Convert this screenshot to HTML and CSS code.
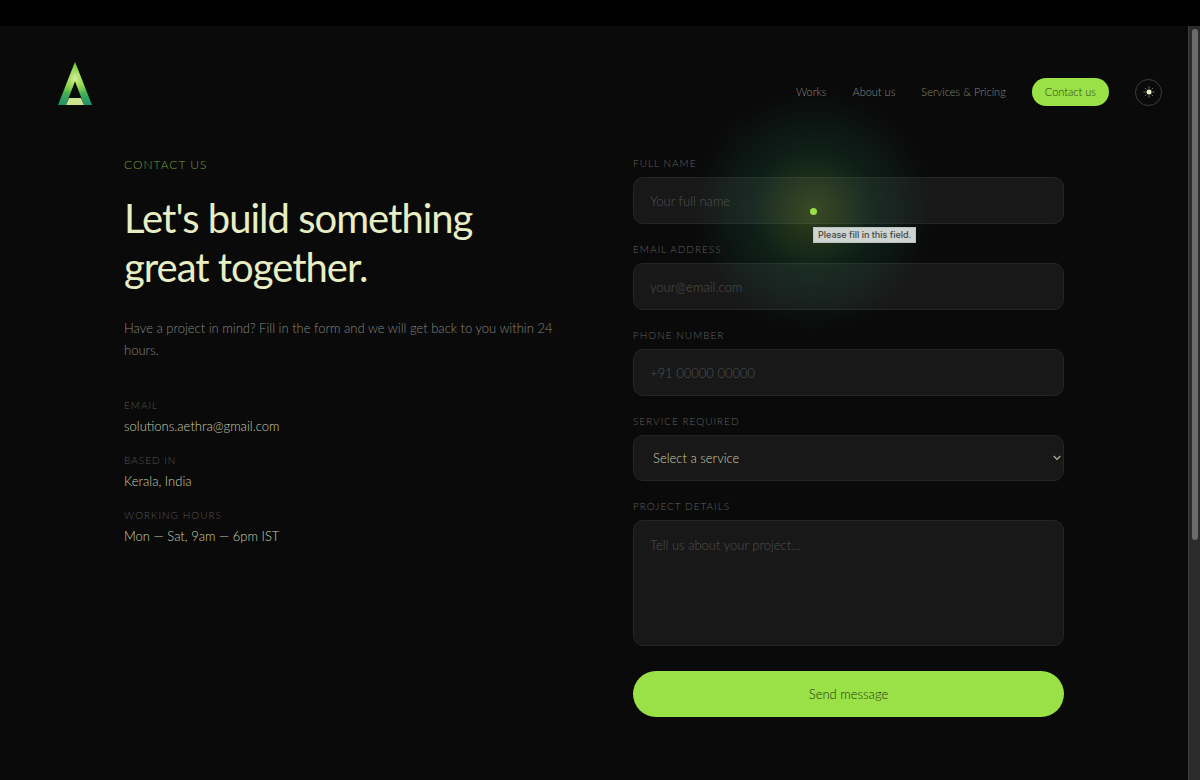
FILE: index.html
```
<!DOCTYPE html>
<html lang="en">
<head>
  <meta charset="UTF-8" />
  <meta name="viewport" content="width=device-width, initial-scale=1.0" />
  <title>Contact | Aethra</title>
  <link rel="stylesheet" href="styles.css">
</head>
<body>

  <div class="topbar"></div>

  <div class="viewport">
    <div class="page">

      <header class="navbar">
        <a class="logo" href="#" aria-label="Aethra">
          <svg width="34" height="44" viewBox="0 0 34 44">
            <defs>
              <linearGradient id="leg" x1="0" y1="0" x2="0" y2="1">
                <stop offset="0" stop-color="#5fc63a" />
                <stop offset="0.5" stop-color="#86d63f" />
                <stop offset="0.75" stop-color="#3fae5a" />
                <stop offset="1" stop-color="#1f8f6a" />
              </linearGradient>
              <radialGradient id="shine" cx="0.5" cy="0.38" r="0.42">
                <stop offset="0" stop-color="#dceda0" />
                <stop offset="1" stop-color="#9ae047" stop-opacity="0" />
              </radialGradient>
            </defs>
            <path d="M17 0 L34 43 H26 L17 19 L8 43 H0 Z" fill="url(#leg)" />
            <path d="M17 0 L34 43 H26 L17 19 L8 43 H0 Z" fill="url(#shine)" />
            <path d="M11 36 H23 L26 43 H8 Z" fill="#cfe38f" />
          </svg>
        </a>
        <nav class="links">
          <a href="#">Works</a>
          <a href="#">About us</a>
          <a href="#">Services &amp; Pricing</a>
          <a href="#" class="active">Contact us</a>
          <button class="theme" type="button" aria-label="Toggle theme">
            <svg width="12" height="12" viewBox="0 0 12 12">
              <circle cx="6" cy="6" r="2.5" fill="#e8eec4" />
              <path d="M6 .5V2.5M6 9.5V11.5M.5 6H2.5M9.5 6H11.5M2.1 2.1L3.4 3.4M8.6 8.6L9.9 9.9M9.9 2.1L8.6 3.4M3.4 8.6L2.1 9.9" stroke="#a5aa8b" stroke-width=".7" />
            </svg>
          </button>
        </nav>
      </header>

      <main class="contact">
        <section class="intro">
          <p class="tag">CONTACT US</p>
          <h1>Let's build something great together.</h1>
          <p class="lead">Have a project in mind? Fill in the form and we will get back to you within 24 hours.</p>
          <dl class="info">
            <div>
              <dt>EMAIL</dt>
              <dd>solutions.aethra@gmail.com</dd>
            </div>
            <div>
              <dt>BASED IN</dt>
              <dd>Kerala, India</dd>
            </div>
            <div>
              <dt>WORKING HOURS</dt>
              <dd>Mon — Sat, 9am — 6pm IST</dd>
            </div>
          </dl>
        </section>

        <form class="form">
          <div class="field">
            <label for="name">FULL NAME</label>
            <input type="text" id="name" placeholder="Your full name" required />
          </div>
          <div class="field">
            <label for="email">EMAIL ADDRESS</label>
            <input type="email" id="email" placeholder="your@email.com" required />
          </div>
          <div class="field">
            <label for="phone">PHONE NUMBER</label>
            <input type="tel" id="phone" placeholder="+91 00000 00000" />
          </div>
          <div class="field">
            <label for="service">SERVICE REQUIRED</label>
            <select id="service">
              <option>Select a service</option>
            </select>
          </div>
          <div class="field">
            <label for="details">PROJECT DETAILS</label>
            <textarea id="details" placeholder="Tell us about your project..."></textarea>
          </div>
          <button class="send" type="submit">Send message</button>
        </form>
      </main>

    </div>

    <div class="scrollbar"><div class="thumb"></div></div>
  </div>

  <!-- Cursor -->
  <div class="glow"></div>
  <div class="dot"></div>
  <div class="tooltip">Please fill in this field.</div>

</body>
</html>
```
FILE: styles.css
```
* {
  box-sizing: border-box;
  margin: 0;
  padding: 0;
}

body {
  background: #0a0a0a;
  color: #e8eec4;
  font-family: 'Lato', sans-serif;
  font-weight: 300;
  height: 100vh;
  display: flex;
  flex-direction: column;
  overflow: hidden;
}

.topbar {
  height: 26px;
  flex-shrink: 0;
  background: #000;
}

.viewport {
  flex: 1;
  min-height: 0;
  display: flex;
}

.page {
  flex: 1;
  overflow: hidden;
}

/* Navbar */
.navbar {
  display: flex;
  justify-content: space-between;
  align-items: flex-start;
  padding: 36px 26px 0 58px;
}

.logo svg {
  display: block;
}

.links {
  display: flex;
  align-items: center;
  gap: 26px;
  padding-top: 16px;
}

.links a {
  color: #85877a;
  font-size: 11px;
  line-height: 16px;
  text-decoration: none;
}

.links .active {
  background: #9ae047;
  color: #2a4410;
  padding: 6px 13px;
  border-radius: 14px;
}

.theme {
  width: 27px;
  height: 27px;
  display: flex;
  align-items: center;
  justify-content: center;
  background: none;
  border: 1px solid #3d3e35;
  border-radius: 50%;
}

/* Contact */
.contact {
  display: grid;
  grid-template-columns: 1fr 1fr;
  gap: 78px;
  max-width: 940px;
  margin: 0 auto;
  padding-top: 51px;
}

.tag {
  color: #6f9f38;
  font-size: 12px;
  line-height: 16px;
  letter-spacing: 1px;
}

h1 {
  margin: 21px 0 25px;
  font-size: 40px;
  font-weight: 400;
  line-height: 49px;
  letter-spacing: -1px;
}

.lead {
  color: #858580;
  font-size: 13px;
  line-height: 22px;
}

.info {
  display: flex;
  flex-direction: column;
  gap: 19px;
  margin-top: 38px;
}

.info dt {
  color: #555;
  font-size: 10px;
  line-height: 13px;
  letter-spacing: 1px;
}

.info dd {
  margin-top: 5px;
  color: #c8ccab;
  font-size: 13px;
  line-height: 18px;
}

/* Form */
.form {
  display: flex;
  flex-direction: column;
  gap: 19px;
}

.field {
  display: flex;
  flex-direction: column;
  gap: 7px;
}

.field label {
  color: #606060;
  font-size: 10px;
  line-height: 13px;
  letter-spacing: 1px;
}

.field input,
.field select,
.field textarea {
  width: 100%;
  height: 47px;
  padding: 0 16px;
  background: #181818;
  border: 1px solid #252525;
  border-radius: 10px;
  color: #c8ccab;
  font-family: inherit;
  font-size: 13px;
  font-weight: 300;
  outline: none;
}

.field ::placeholder {
  color: #505050;
}

.field select {
  height: 46px;
  padding-left: 19px;
  appearance: none;
  background: #181818 url("data:image/svg+xml,%3Csvg xmlns='http://www.w3.org/2000/svg' width='8' height='6' fill='none' stroke='%23b5b99a' stroke-width='1.2'%3E%3Cpath d='M.7 1L4 4.4L7.3 1'/%3E%3C/svg%3E") no-repeat right 2px center;
}

.field textarea {
  display: block;
  height: 126px;
  padding: 16px;
  resize: none;
}

.send {
  height: 46px;
  margin-top: 6px;
  background: #9ae047;
  border: none;
  border-radius: 23px;
  color: #243a0e;
  font-family: inherit;
  font-size: 13px;
  font-weight: 300;
}

/* Scrollbar */
.scrollbar {
  width: 12px;
  padding: 3px 2px 0 3px;
  background: #2c2c2c;
  border-left: 1px solid #3e3e3e;
}

.thumb {
  width: 6px;
  height: 68%;
  background: #6b6b6b;
  border-radius: 3px;
}

/* Cursor */
.glow,
.dot,
.tooltip {
  position: absolute;
  pointer-events: none;
}

.glow {
  left: 693px;
  top: 91px;
  width: 240px;
  height: 240px;
  border-radius: 50%;
  background: radial-gradient(closest-side, rgba(154, 225, 71, 0.25), rgba(34, 139, 94, 0.17) 50%, transparent);
}

.dot {
  left: 810px;
  top: 208px;
  width: 7px;
  height: 7px;
  border-radius: 50%;
  background: #9ae047;
}

.tooltip {
  left: 813px;
  top: 227px;
  padding: 0 4px;
  background: #ced4d1;
  border: 1px solid #bcc2bf;
  color: #444;
  font-family: 'Inter', sans-serif;
  font-size: 9px;
  font-weight: 500;
  line-height: 14px;
  white-space: nowrap;
}
```
